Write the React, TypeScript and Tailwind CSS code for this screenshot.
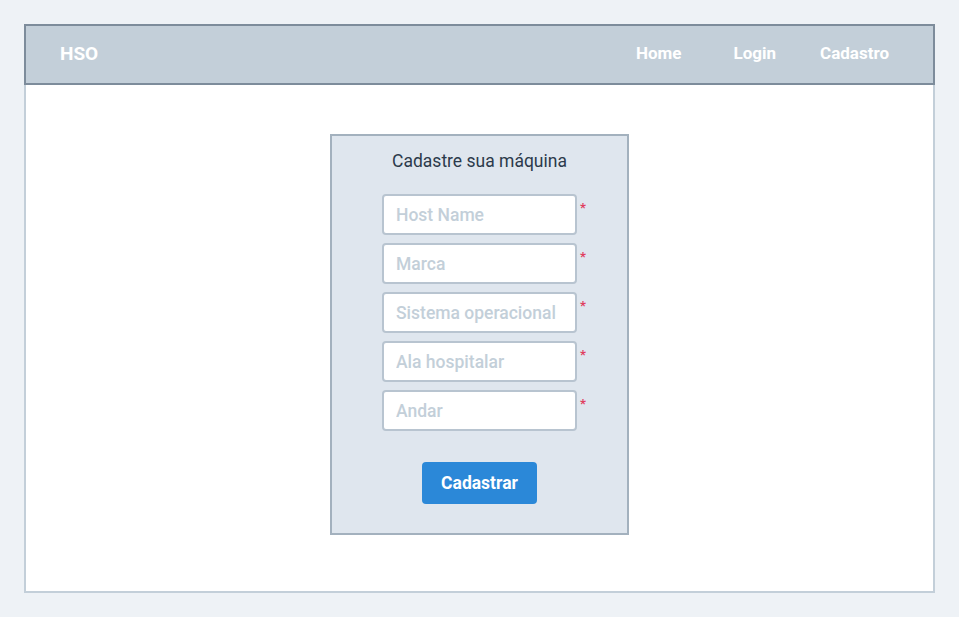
import React from "react";

const fields = ["Host Name", "Marca", "Sistema operacional", "Ala hospitalar", "Andar"];

export default function App() {
  return (
    <div
      className="min-h-[617px] bg-[#eef2f6] p-6"
      style={{ fontFamily: "Roboto, 'Noto Sans', sans-serif" }}
    >
      <div className="w-[911px] h-[569px] flex flex-col">
        <header className="h-[61px] flex items-center justify-between border-2 border-[#7d8c9b] bg-[#c3cfd9] pl-[34px] pr-[44px]">
          <span className="text-[19px] font-bold text-white -mt-[1px]">HSO</span>
          <nav className="flex items-center gap-[50px] text-[17px] font-bold text-white -mt-[2px]">
            <a className="-ml-[1px]">Home</a>
            <a className="ml-[2px]">Login</a>
            <a className="-ml-[6px]">Cadastro</a>
          </nav>
        </header>

        <main className="flex-1 bg-white border-2 border-t-0 border-[#c3cfd9] flex justify-center pt-[49px]">
          <form
            className="w-[299px] h-[401px] bg-[#dfe6ee] border-2 border-[#a3b1be] flex flex-col items-center pt-[13px]"
            onSubmit={(e) => e.preventDefault()}
          >
            <h1 className="text-[17.5px] text-[#2c3a4b] leading-6">Cadastre sua máquina</h1>

            <div className="mt-[21px] flex flex-col gap-2">
              {fields.map((f) => (
                <div key={f} className="relative">
                  <input
                    placeholder={f}
                    className="w-[195px] h-[41px] rounded border-2 border-[#b8c4d0] bg-white px-3 text-[17.5px] font-medium text-[#2c3a4b] placeholder:text-[#c3cfd9] outline-none"
                  />
                  <span className="absolute left-[198px] top-[4px] text-[13px] font-bold text-[#e0405e]">*</span>
                </div>
              ))}
            </div>

            <button
              type="submit"
              className="mt-[31px] w-[115px] h-[42px] rounded bg-[#2b88d8] text-[17.5px] font-bold text-white"
            >
              Cadastrar
            </button>
          </form>
        </main>
      </div>
    </div>
  );
}
